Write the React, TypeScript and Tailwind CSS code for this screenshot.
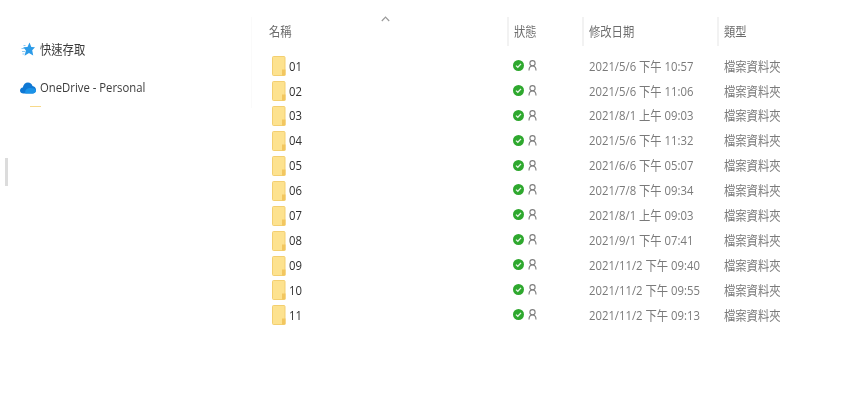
import React from 'react';

const rows = [
  { name: '01', date: '2021/5/6 下午 10:57' },
  { name: '02', date: '2021/5/6 下午 11:06' },
  { name: '03', date: '2021/8/1 上午 09:03' },
  { name: '04', date: '2021/5/6 下午 11:32' },
  { name: '05', date: '2021/6/6 下午 05:07' },
  { name: '06', date: '2021/7/8 下午 09:34' },
  { name: '07', date: '2021/8/1 上午 09:03' },
  { name: '08', date: '2021/9/1 下午 07:41' },
  { name: '09', date: '2021/11/2 下午 09:40' },
  { name: '10', date: '2021/11/2 下午 09:55' },
  { name: '11', date: '2021/11/2 下午 09:13' },
];

// the screenshot is squeezed sideways, so text is taller than it is wide
const Label = ({ children }: { children: React.ReactNode }) => (
  <span className="inline-block origin-left scale-x-[0.87] whitespace-nowrap">{children}</span>
);

const FolderIcon = () => (
  <svg width="14" height="20" viewBox="0 0 14 20" className="shrink-0">
    <rect x="0.5" y="0.5" width="12.5" height="19" rx="1" fill="#fde28f" stroke="#f3cf70" />
    <path d="M10 13.5h3.5V19.5H10z" fill="#f2c65f" />
  </svg>
);

const SyncedIcon = () => (
  <svg width="11" height="11" viewBox="0 0 11 11" className="shrink-0">
    <circle cx="5.5" cy="5.5" r="5.5" fill="#2ea82e" />
    <path d="M3 5.6 4.8 7.3 8 3.9" fill="none" stroke="#e6f6e6" strokeWidth="1.3" />
  </svg>
);

const PersonIcon = () => (
  <svg width="9" height="11" viewBox="0 0 9 11" className="shrink-0">
    <circle cx="4.5" cy="3.2" r="2.6" fill="none" stroke="#7d7d7d" strokeWidth="1.1" />
    <path d="M1 10.5C1 7.8 2.4 6 4.5 6S8 7.8 8 10.5" fill="none" stroke="#7d7d7d" strokeWidth="1.1" />
  </svg>
);

const StarIcon = () => (
  <svg width="14" height="15" viewBox="0 0 14 15" className="shrink-0">
    <path d="M8.5 0.500 10.300 4.900 14 5.300 11.200 8.300 12.200 13.500 8 11 3.600 13.800 4.900 8.500 2.200 5.300 6.500 4.900Z" fill="#2b9be8" />
    <path d="M2.500 3.500h2M0.500 6.500h2.500M1 9.500h3M1.500 12h2" stroke="#8cc8f2" strokeWidth="1" />
  </svg>
);

const CloudIcon = () => (
  <svg width="16" height="12" viewBox="0 0 16 12" className="shrink-0">
    <path d="M3.400 11.500C1.500 11.500 0 10.200 0 8.500 0 6.900 1.200 5.700 2.800 5.500 3.400 2.400 5.400 0.500 8 0.500c2.200 0 3.900 1.400 4.500 3.400C14.500 4.100 16 5.700 16 7.800 16 9.900 14.500 11.500 12.600 11.500Z" fill="#0f78d4" />
    <path d="M5.500 11.500C4.500 9 6 6.800 8.500 6.200 10.500 5.700 12.500 6 14 6.500 15.300 7.100 16 8.300 16 9 15.800 10.500 14.500 11.500 12.600 11.500Z" fill="#1b93e8" />
  </svg>
);

const HeaderCell = ({ label, className }: { label: string; className: string }) => (
  <div className={`flex h-[29px] items-center border-l-2 border-[#f2f2f2] pl-[5px] ${className}`}>
    <Label>{label}</Label>
  </div>
);

export default function App() {
  return (
    <div
      className="flex h-[404px] w-[851px] overflow-hidden bg-white text-[13px] blur-[0.5px]"
      style={{ fontFamily: '"Open Sans", "Noto Sans CJK TC", sans-serif' }}
    >
      <aside className="relative w-[252px] shrink-0 pt-[41px] text-[#3c3c3c]">
        <div className="flex h-[17px] items-center gap-[5px] pl-[21px]">
          <StarIcon />
          <Label>快速存取</Label>
        </div>
        <div className="mt-[21px] flex h-[17px] items-center gap-[4px] pl-[20px]">
          <CloudIcon />
          <Label>OneDrive - Personal</Label>
        </div>
        <div className="ml-[30px] mt-[10px] h-px w-[11px] bg-[#f7d98a]" />
        <div className="ml-[5px] mt-[51px] h-[28px] w-[3px] bg-[#dcdcdc]" />
        <div className="absolute right-0 top-[17px] h-[91px] w-px bg-[#fafafa]" />
      </aside>

      <main className="relative flex-1 pt-[17px]">
        <svg width="9" height="6" viewBox="0 0 9 6" className="absolute left-[129px] top-[16px]">
          <path d="M0.800 5 4.500 1.200 8.200 5" fill="none" stroke="#9a9a9a" strokeWidth="1.200" />
        </svg>
        <div className="flex text-[#6d6d6d]">
          <div className="flex h-[29px] w-[255px] items-center pl-[17px]">
            <Label>名稱</Label>
          </div>
          <HeaderCell label="狀態" className="w-[75px]" />
          <HeaderCell label="修改日期" className="w-[135px]" />
          <HeaderCell label="類型" className="flex-1" />
        </div>
        <div className="mt-[8px]">
          {rows.map((row) => (
            <div key={row.name} className="flex h-[24.9px] items-center">
              <div className="flex w-[255px] items-center gap-[3px] pl-[20px] text-[#2f2f2f]">
                <FolderIcon />
                <Label>{row.name}</Label>
              </div>
              <div className="flex w-[75px] -translate-y-px items-center gap-[4px] pl-[6px]">
                <SyncedIcon />
                <PersonIcon />
              </div>
              <div className="w-[135px] pl-[7px] text-[#7a7a7a]">
                <Label>{row.date}</Label>
              </div>
              <div className="pl-[7px] text-[#7a7a7a]">
                <Label>檔案資料夾</Label>
              </div>
            </div>
          ))}
        </div>
      </main>
    </div>
  );
}
